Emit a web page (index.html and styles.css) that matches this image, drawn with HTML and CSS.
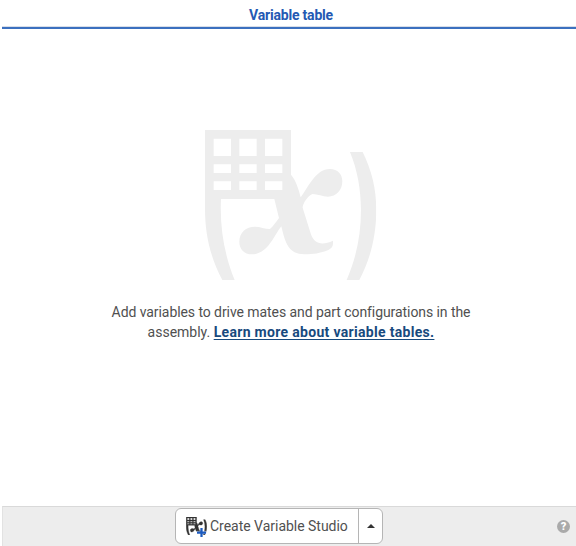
FILE: index.html
```html
<!DOCTYPE html>
<html lang="en">
<head>
<meta charset="utf-8">
<title>Variable table</title>
<link rel="stylesheet" href="styles.css">
</head>
<body>
<svg class="defs" width="0" height="0" aria-hidden="true">
  <symbol id="variables" viewBox="45 30 514 450">
    <path fill-rule="evenodd" d="M45 30H303V164C317 180 326 207 332 232C354 204 376 147 420 147C443 147 457 162 457 184C457 211 439 230 414 230C398 230 382 222 368 222C355 226 338 250 338 263L362 340C372 374 398 376 429 362C430 377 428 384 415 390C390 400 370 403 344 403C295 403 286 369 274 319C252 346 234 403 186 403C162 403 148 387 148 365C148 338 168 320 195 320C211 320 224 327 240 327C248 321 259 305 267 294L253 237H93C89 322 103 405 134 480H97C63 416 45 348 45 266ZM71 56V108H123V56ZM148 56V108H200V56ZM225 56V108H277V56ZM71 133V159H123V133ZM148 133V159H200V133ZM225 133V159H277V133ZM71 184V210H123V184ZM148 184V210H200V184ZM225 184V210H277V184ZM480 96H518C545 150 559 207 559 269C559 348 541 418 508 480H470C499 413 513 345 513 270C513 208 502 149 480 96Z"/>
  </symbol>
</svg>
<div class="panel">
  <header class="tab"><span>Variable table</span></header>
  <main class="empty">
    <svg class="hero"><use href="#variables"/></svg>
    <p class="message"><span class="line first">Add variables to drive mates and part configurations in the</span>
    <span class="line second">assembly. <a href="#">Learn more about variable tables.</a></span></p>
  </main>
  <footer class="bar">
    <div class="split">
      <button class="create"><span class="icon"><svg class="small"><use href="#variables"/></svg><svg class="plus" viewBox="0 0 8 8"><path d="M3 0H5V3H8V5H5V8H3V5H0V3H3Z"/></svg></span><span class="label">Create Variable Studio</span></button>
      <button class="more" aria-label="More"><svg width="8" height="4" viewBox="0 0 8 4"><path d="M0 4L4 0L8 4Z"/></svg></button>
    </div>
    <span class="help">?</span>
  </footer>
</div>
</body>
</html>
```
FILE: styles.css
```css
* { box-sizing: border-box; }
body { margin: 0; background: #fff; font-family: Roboto, "Liberation Sans", sans-serif; color: #505050; }
.defs { position: absolute; }
.panel { height: 546px; margin-left: 2px; display: flex; flex-direction: column; }
.tab { height: 29px; padding-top: 5px; border-bottom: 2px solid #3c70bf; box-shadow: inset 0 -1px #d8dee8; text-align: center; font-size: 14px; letter-spacing: -.2px; line-height: 20px; font-weight: 700; color: #2459b3; padding-left: 4px; }
.empty { flex: 1; display: flex; flex-direction: column; align-items: center; padding: 101px 0 0 4px; }
.hero { width: 171.3px; height: 150px; fill: #ededed; }
.message { margin: 22px 0 0; font-size: 14px; line-height: 20px; text-align: center; white-space: nowrap; }
.line { display: block; }
.first { letter-spacing: -.07px; }
.message a { color: #174a7e; font-weight: 700; letter-spacing: .31px; text-decoration-thickness: 1px; text-underline-offset: 2px; }
.bar { height: 40px; position: relative; background: #ededed; border-top: 1px solid #d9d9d9; border-left: 1px solid #e2e2e2; padding: 1px 0 0 172px; }
.split { width: 208px; height: 36px; display: flex; background: #fff; border: 1px solid #b5b5b5; border-radius: 6px; }
button { margin: 0; border: 0; background: none; font: inherit; color: inherit; padding: 0; }
.create { width: 183px; display: flex; align-items: center; padding-left: 10px; border-right: 1px solid #b5b5b5; font-size: 14px; }
.icon { position: relative; width: 21px; height: 18px; margin-right: 3px; flex: none; }
.small { width: 21px; height: 18px; display: block; fill: #333; stroke: #333; stroke-width: 9; }
.plus { position: absolute; left: 11px; top: 11px; width: 9px; height: 9px; fill: #1c5bc0; stroke: #fff; stroke-width: .6; paint-order: stroke; overflow: visible; }
.label { white-space: nowrap; letter-spacing: -.02px; }
.more { flex: 1; display: flex; align-items: center; justify-content: center; fill: #333; }
.help { position: absolute; right: 6px; top: 13px; width: 13px; height: 13px; border-radius: 50%; background: #aaa; color: #fff; font-size: 11px; line-height: 13px; font-weight: 900; text-align: center; }
```
